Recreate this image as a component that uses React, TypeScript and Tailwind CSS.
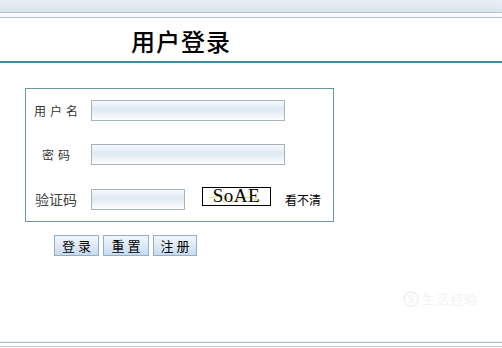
import React from "react";

const inputCls =
  "h-[21px] border border-[#a7b4bb] bg-[linear-gradient(to_bottom,#f6f9fc_0%,#dde9f3_45%,#ffffff_100%)] outline-none";

const btnCls =
  "h-[21px] border border-[#93aecb] bg-[linear-gradient(to_bottom,#f2f7fc_0%,#dbe7f4_60%,#c6d9ee_100%)] text-[13px] leading-[19px] text-black tracking-[3px] pl-[3px]";

export default function App() {
  return (
    <div
      className="w-[502px] h-[348px] bg-white flex flex-col overflow-hidden"
      style={{ fontFamily: '"Noto Sans CJK SC", "DejaVu Sans", sans-serif' }}
    >
      {/* top bar */}
      <div className="h-[12px] bg-[linear-gradient(to_bottom,#eaf0f5,#dbe4ec)]" />
      <div className="h-[1px] bg-[#b7c3cc]" />
      <div className="h-[4px] bg-[#f8fafc]" />
      <div className="h-[1px] bg-[#b3bec6]" />
      {/* title */}
      <div className="h-[43px] flex items-center pl-[131px]">
        <span className="text-[24px] leading-[24px] font-medium text-black tracking-[1px] mt-[2px]">
          用户登录
        </span>
      </div>
      <div className="h-[2px] bg-[#3a8fac]" />

      {/* form box */}
      <div className="ml-[25px] mt-[25px] w-[309px] h-[134px] border border-[#6a979f] pt-[11px] flex flex-col">
        <div className="flex items-center h-[21px]">
          <div className="w-[60px] text-center text-[12px] tracking-[4px] pl-[4px] text-[#333]">
            用户名
          </div>
          <input className={`${inputCls} ml-[5px] w-[194px]`} />
        </div>
        <div className="flex items-center h-[21px] mt-[23px]">
          <div className="w-[60px] text-center text-[12px] tracking-[4px] pl-[4px] text-[#333]">
            密码
          </div>
          <input type="password" className={`${inputCls} ml-[5px] w-[194px]`} />
        </div>
        <div className="flex items-center h-[21px] mt-[24px]">
          <div className="w-[60px] text-center text-[14px] text-[#444]">验证码</div>
          <input className={`${inputCls} ml-[5px] w-[94px]`} />
          <div className="relative ml-[17px] -mt-[7px] w-[69px] h-[19px] border border-black bg-white flex items-center justify-center overflow-hidden">
            <svg className="absolute inset-0" width="69" height="19">
              <path d="M6 10 L20 7 L30 14 L44 9 L58 13" stroke="#e8d86a" strokeWidth="1" fill="none" />
              <path d="M10 4 L22 15 M45 3 L55 16" stroke="#efe08a" strokeWidth="1" fill="none" />
            </svg>
            <span
              className="relative text-[19px] leading-[18px] text-black tracking-[0.5px]"
              style={{ fontFamily: '"Liberation Serif", serif' }}
            >
              SoAE
            </span>
          </div>
          <span className="ml-[14px] text-[12px] text-black">看不清</span>
        </div>
      </div>

      {/* buttons */}
      <div className="flex ml-[54px] mt-[13px] gap-[4px]">
        <button className={`${btnCls} w-[45px]`}>登录</button>
        <button className={`${btnCls} w-[46px]`}>重置</button>
        <button className={`${btnCls} w-[44px]`}>注册</button>
      </div>

      {/* faint watermark */}
      <div className="flex justify-end pr-[24px] mt-[32px] h-[22px] items-center gap-[3px] text-[#f3f3f3]">
        <span className="w-[16px] h-[16px] rounded-full border-2 border-[#f3f3f3] text-[10px] leading-[12px] text-center font-bold">
          S
        </span>
        <span className="text-[13px] tracking-[1px]">生活经验</span>
      </div>

      <div className="flex-1" />
      {/* bottom lines */}
      <div className="h-[1px] bg-[#eef3f6]" />
      <div className="h-[1px] bg-[#aebdc5]" />
      <div className="h-[3px] bg-white" />
      <div className="h-[1px] bg-[#c2c8cc]" />
      <div className="h-[1px] bg-white" />
    </div>
  );
}
